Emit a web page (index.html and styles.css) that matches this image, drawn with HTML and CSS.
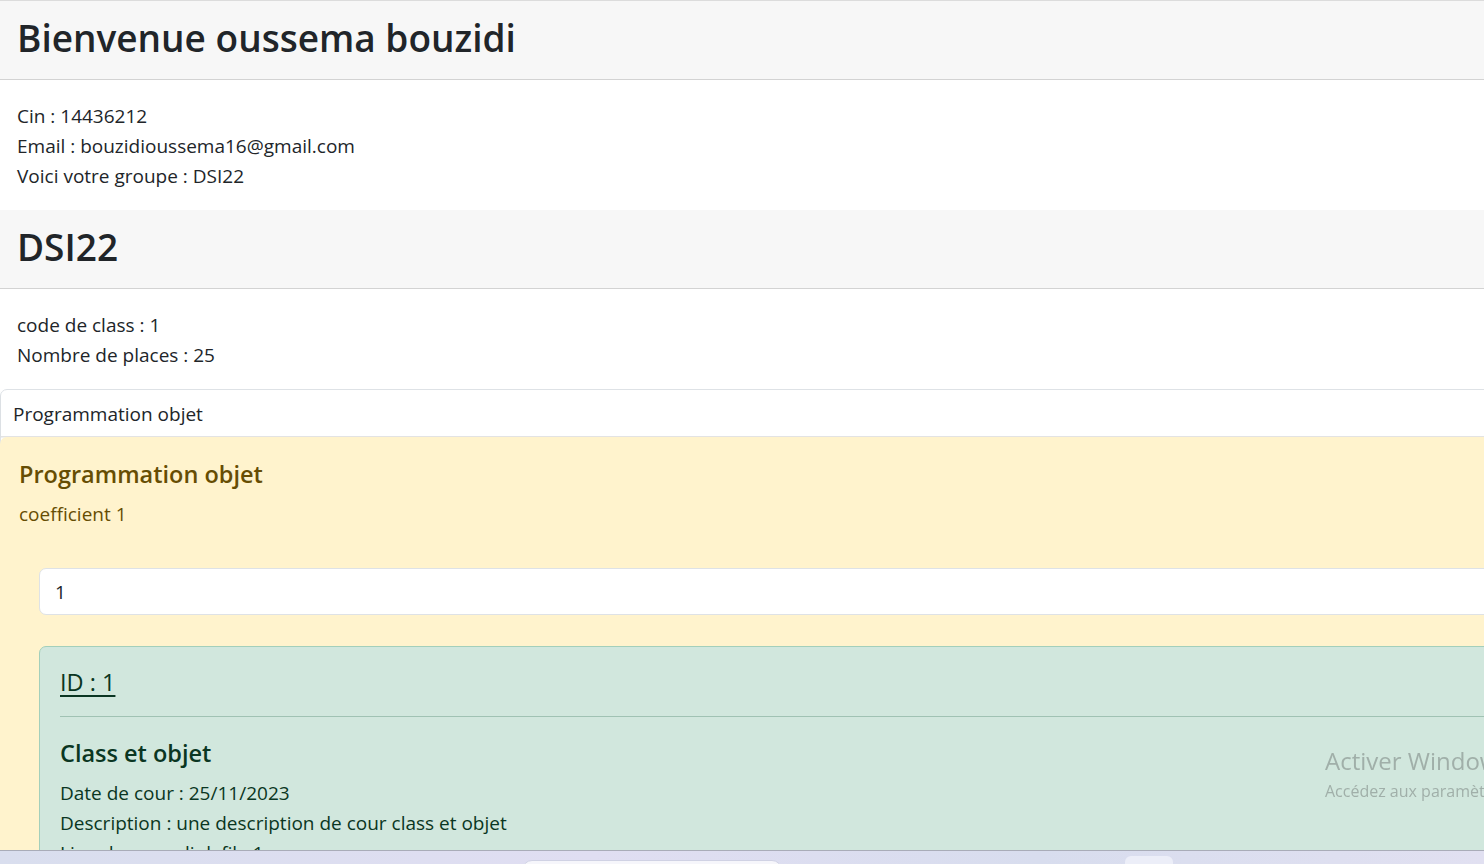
FILE: index.html
```html
<!DOCTYPE html>
<html lang="fr">
<head>
<meta charset="utf-8">
<title>Bienvenue</title>
<link rel="stylesheet" href="styles.css">
</head>
<body>
<div class="page">
  <section class="card">
    <div class="card-header card-header-first"><h1 class="title">Bienvenue oussema bouzidi</h1></div>
    <div class="card-body">
      <p>Cin : 14436212</p>
      <p>Email : bouzidioussema16@gmail.com</p>
      <p>Voici votre groupe : DSI22</p>
    </div>
  </section>
  <section class="card">
    <div class="card-header"><h1 class="title">DSI22</h1></div>
    <div class="card-body">
      <p>code de class : 1</p>
      <p>Nombre de places : 25</p>
    </div>
  </section>
  <section class="module">
    <div class="module-head">Programmation objet</div>
    <div class="alert-warning">
      <h5 class="module-title">Programmation objet</h5>
      <p class="coef">coefficient 1</p>
      <div class="inner">
        <div class="item">1</div>
        <div class="alert-success">
          <h5 class="cours-id">ID : 1</h5>
          <hr class="sep">
          <h5 class="cours-title">Class et objet</h5>
          <p>Date de cour : 25/11/2023</p>
          <p>Description : une description de cour class et objet</p>
          <p>Lien du cour : link file 1</p>
        </div>
      </div>
    </div>
  </section>
</div>
<div class="watermark">
  <div class="wm-big">Activer Windows</div>
  <div class="wm-small">Accédez aux paramètres pour activer Windows.</div>
</div>
<div class="taskbar">
  <div class="tb-search"></div>
  <div class="tb-btn"></div>
</div>
</body>
</html>
```
FILE: styles.css
```css
html, body {
  margin: 0;
  padding: 0;
  overflow: hidden;
  height: 100%;
}
body {
  font-family: "Open Sans", "Noto Sans", sans-serif;
  font-size: 19px;
  line-height: 30px;
  color: #212529;
  background: #ffffff;
}
p { margin: 0; }
.page {
  width: 1700px;
}
.card-header {
  background: #f7f7f7;
  border-bottom: 1px solid #d3d3d3;
  height: 79px;
  box-sizing: border-box;
  display: flex;
  align-items: center;
  padding: 0 0 5px 17px;
}
.card-header-first {
  border-top: 1px solid #dcdcdc;
  height: 80px;
}
.title {
  margin: 0;
  font-size: 37px;
  font-weight: 600;
  line-height: 46px;
  color: #212529;
}
.card-body {
  padding: 21px 17px 19px;
}
.module {
  border: 1px solid #dee2e6;
  border-radius: 7px;
  background: #fff;
}
.module-head {
  padding: 9px 12px 7px;
  height: 30px;
  border-bottom: 1px solid #e3e3e3;
  box-shadow: 0 1px 1px rgba(0,0,0,0.06);
}
.alert-warning {
  background: #fff3cd;
  color: #664d03;
  border-radius: 7px 0 0 0;
  margin-left: -1px;
  padding: 22px 19px 40px;
}
.module-title {
  margin: 0 0 10px;
  font-size: 23.5px;
  line-height: 30px;
  font-weight: 600;
  color: #664d03;
}
.coef { color: #664d03; }
.inner {
  padding: 39px 0 0 20px;
  display: flex;
  flex-direction: column;
  gap: 31px;
}
.item {
  background: #fff;
  border: 1px solid #dee2e6;
  border-radius: 7px;
  padding: 8px 15px 7px;
  color: #212529;
}
.alert-success {
  background: #d1e7dd;
  border: 1px solid #a3cfbb;
  border-radius: 7px;
  padding: 20px;
  color: #0a3622;
  height: 400px;
}
.cours-id {
  margin: 0 0 19px;
  font-size: 23.5px;
  line-height: 30px;
  font-weight: 500;
  text-decoration: underline;
  text-decoration-thickness: 2px;
  text-underline-offset: 4px;
  color: #0a3622;
}
.sep {
  margin: 0 0 21px;
  border: 0;
  border-top: 1px solid #a0c2b3;
  width: 1600px;
}
.cours-title {
  margin: 0 0 10px;
  font-size: 23.5px;
  line-height: 30px;
  font-weight: 600;
  color: #0a3622;
}
.watermark {
  position: fixed;
  left: 1325px;
  top: 744px;
  color: rgba(120,130,125,0.55);
  white-space: nowrap;
  font-family: "Open Sans", "Noto Sans", sans-serif;
}
.wm-big { font-size: 24px; line-height: 34px; }
.wm-small { font-size: 16px; line-height: 22px; margin-top: 2px; }
.taskbar {
  position: fixed;
  left: 0;
  right: 0;
  bottom: 0;
  height: 13px;
  border-top: 1px solid #a9acb8;
  background: linear-gradient(90deg, #d9deee, #e0def2 40%, #d8ddee 70%, #e1e0f1);
}
.tb-search {
  position: absolute;
  left: 522px;
  top: 9px;
  width: 258px;
  height: 20px;
  border-radius: 10px;
  background: #f6f6fb;
  border: 1px solid #d0d2e4;
}
.tb-btn {
  position: absolute;
  left: 1125px;
  top: 5px;
  width: 48px;
  height: 20px;
  border-radius: 6px;
  background: #eceef8;
}
```
